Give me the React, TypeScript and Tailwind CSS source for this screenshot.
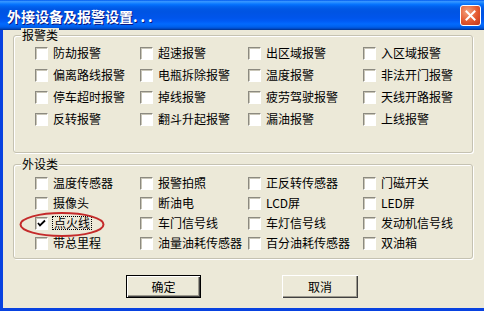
import React from 'react'

const FONT = { fontFamily: '"SimSun", "Noto Sans CJK SC", "Liberation Sans", sans-serif' }

const alarmItems = [
  ['防劫报警', '超速报警', '出区域报警', '入区域报警'],
  ['偏离路线报警', '电瓶拆除报警', '温度报警', '非法开门报警'],
  ['停车超时报警', '掉线报警', '疲劳驾驶报警', '天线开路报警'],
  ['反转报警', '翻斗升起报警', '漏油报警', '上线报警'],
]

const deviceItems = [
  ['温度传感器', '报警拍照', '正反转传感器', '门磁开关'],
  ['摄像头', '断油电', 'LCD屏', 'LED屏'],
  ['点火线', '车门信号线', '车灯信号线', '发动机信号线'],
  ['带总里程', '油量油耗传感器', '百分油耗传感器', '双油箱'],
]

function CheckBox({ checked }: { checked?: boolean }) {
  return (
    <span className="w-[13px] h-[13px] shrink-0 border border-t-[#8c8a80] border-l-[#8c8a80] border-b-white border-r-white bg-white shadow-[inset_1px_1px_0_#c9c6b8] flex items-center justify-center">
      {checked && (
        <svg width="9" height="9" viewBox="0 0 9 9">
          <path d="M1 4 L3 6.5 L8 1.5" fill="none" stroke="#000" strokeWidth="1.8" />
        </svg>
      )}
    </span>
  )
}

function Item({ label, checked, focused }: { label: string; checked?: boolean; focused?: boolean }) {
  return (
    <div className="flex items-center whitespace-nowrap">
      <CheckBox checked={checked} />
      <span
        className={
          focused
            ? 'ml-[4px] px-[1px] leading-[12px] border border-dotted border-black'
            : 'ml-[5px] leading-[14px]'
        }
      >
        {label}
      </span>
    </div>
  )
}

function Group({
  title,
  rows,
  heightClass,
  rowClass,
  topPad,
}: {
  title: string
  rows: string[][]
  heightClass: string
  rowClass: string
  topPad: string
}) {
  return (
    <div className={`relative border border-[#c5c2b2] rounded-[3px] shadow-[inset_1px_1px_0_#fff,1px_1px_0_#fff] ${heightClass} ${topPad} pl-[21px]`}>
      <span className="absolute -top-[8px] left-[7px] px-[1px] bg-[#ece9d8] leading-[14px]">{title}</span>
      {rows.map((row, i) => (
        <div key={i} className={`grid grid-cols-[105px_108px_115px_1fr] items-center ${rowClass}`}>
          {row.map((label) => (
            <Item
              key={label}
              label={label}
              checked={label === '点火线'}
              focused={label === '点火线'}
            />
          ))}
        </div>
      ))}
    </div>
  )
}

export default function App() {
  return (
    <div className="relative w-[484px] h-[311px] overflow-hidden bg-[#ece9d8] text-[12px] text-black" style={FONT}>
      {/* Title bar */}
      <div className="h-[30px] flex items-center justify-between pl-[7px] pr-[3px] bg-[linear-gradient(to_bottom,#0058ee_0%,#3593ff_5%,#288eff_8%,#127dff_12%,#036ffc_16%,#0262ee_22%,#0057e5_30%,#0054e3_40%,#0055eb_60%,#005bf5_70%,#026afe_80%,#0062ef_88%,#0052d6_94%,#0040ab_97%,#003092_100%)]">
        <span className="text-white font-bold text-[14px] leading-[16px] pt-[2px] [text-shadow:1px_1px_0_#0a1883]">
          外接设备及报警设置<span className="tracking-[3px]">...</span>
        </span>
        <div className="w-[21px] h-[21px] rounded-[3px] border border-white bg-[radial-gradient(circle_at_35%_30%,#f3a27e,#e4592f_55%,#c2351a)] flex items-center justify-center">
          <svg width="11" height="11" viewBox="0 0 11 11">
            <path d="M1.5 1.5 L9.5 9.5 M9.5 1.5 L1.5 9.5" stroke="#fff" strokeWidth="2" strokeLinecap="square" />
          </svg>
        </div>
      </div>

      {/* Body */}
      <div className="h-[281px] border-l-[3px] border-b-[3px] border-[#0842e0] pl-[10px] pr-[11px] pt-[5px]">
        <Group title="报警类" rows={alarmItems} heightClass="h-[118px]" rowClass="h-[22px]" topPad="pt-[6px]" />
        <div className="mt-[11px]">
          <Group title="外设类" rows={deviceItems} heightClass="h-[95px]" rowClass="h-[20px]" topPad="pt-[8px]" />
        </div>

        <div className="mt-[16px] flex justify-center gap-[81px] pr-[2px]">
          <button className="w-[75px] h-[23px] border border-black bg-[#ece9d8] shadow-[inset_1px_1px_0_#fff,inset_-1px_-1px_0_#404040,inset_-2px_-2px_0_#9d9a8e] leading-[14px]">
            确定
          </button>
          <button className="w-[76px] h-[23px] bg-[#ece9d8] shadow-[inset_1px_1px_0_#fff,inset_-1px_-1px_0_#404040,inset_-2px_-2px_0_#9d9a8e] leading-[14px]">
            取消
          </button>
        </div>
      </div>

      {/* Red highlight ellipse */}
      <svg className="absolute left-[19px] top-[211px] pointer-events-none" width="88" height="28" viewBox="0 0 88 28">
        <ellipse cx="43" cy="13.5" rx="41.5" ry="11.5" fill="none" stroke="#c42a2a" strokeWidth="2" />
      </svg>
    </div>
  )
}
